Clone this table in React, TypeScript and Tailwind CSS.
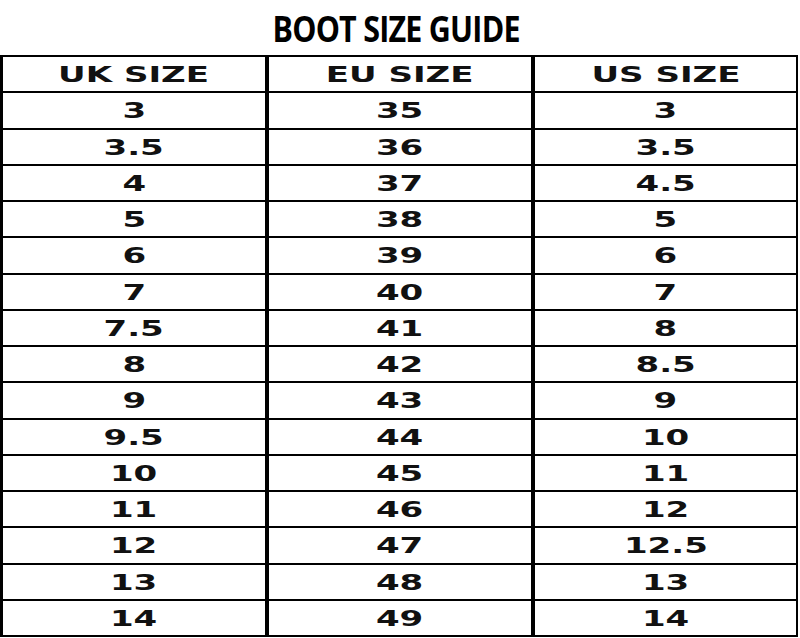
import React from "react";

const rows: [string, string, string][] = [
  ["3", "35", "3"],
  ["3.5", "36", "3.5"],
  ["4", "37", "4.5"],
  ["5", "38", "5"],
  ["6", "39", "6"],
  ["7", "40", "7"],
  ["7.5", "41", "8"],
  ["8", "42", "8.5"],
  ["9", "43", "9"],
  ["9.5", "44", "10"],
  ["10", "45", "11"],
  ["11", "46", "12"],
  ["12", "47", "12.5"],
  ["13", "48", "13"],
  ["14", "49", "14"],
];

const Cell = ({ text, className }: { text: string; className: string }) => (
  <div className={`flex items-center justify-center pt-[3px] ${className}`}>
    <span className="inline-block scale-x-[1.62] font-bold text-[21px] leading-none text-[#111] font-['DejaVu_Sans',sans-serif]">
      {text}
    </span>
  </div>
);

const Row = ({ cols, last }: { cols: [string, string, string]; last?: boolean }) => (
  <div className={`flex flex-1 ${last ? "" : "border-b-2 border-black"}`}>
    <Cell text={cols[0]} className="w-[266px] border-r-4 border-black" />
    <Cell text={cols[1]} className="w-[266px] border-r-4 border-black" />
    <Cell text={cols[2]} className="flex-1" />
  </div>
);

export default function App() {
  return (
    <div className="w-[800px] h-[638px] bg-white flex flex-col">
      <div className="h-[55px] flex items-center justify-center">
        <h1 className="inline-block scale-x-[0.87] text-[35px] leading-none font-bold text-black tracking-tight font-['Open_Sans',sans-serif] pt-[2px] mr-[7px]">
          BOOT SIZE GUIDE
        </h1>
      </div>
      <div className="w-[798px] h-[582px] flex flex-col border-l-[3px] border-t-2 border-r-2 border-b-2 border-black">
        <Row cols={["UK SIZE", "EU SIZE", "US SIZE"]} />
        {rows.map((r, i) => (
          <Row key={i} cols={r} last={i === rows.length - 1} />
        ))}
      </div>
    </div>
  );
}
